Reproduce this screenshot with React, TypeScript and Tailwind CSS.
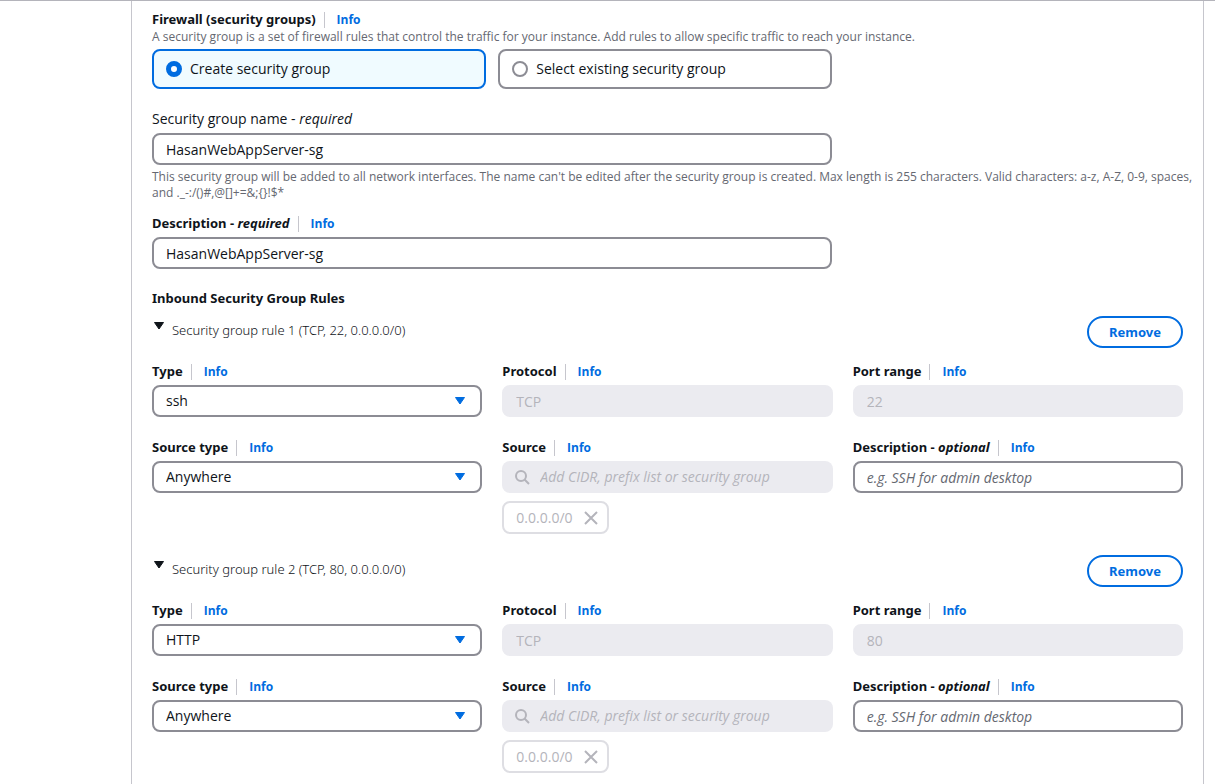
import { useState, type ReactNode } from 'react'
import clsx from 'clsx'

const rules = [
  { id: 1, type: 'ssh', protocol: 'TCP', port: '22', cidr: '0.0.0.0/0' },
  { id: 2, type: 'HTTP', protocol: 'TCP', port: '80', cidr: '0.0.0.0/0' },
]

const nameHint =
  "This security group will be added to all network interfaces. The name can't be edited after the security group is created. Max length is 255 characters. Valid characters: a-z, A-Z, 0-9, spaces, and ._-:/()#,@[]+=&;{}!$*"

const heading = "font-['Noto_Sans',sans-serif] text-[13px] leading-5 font-bold"
const inputBase = 'block h-8 w-full rounded-lg border-2 px-3 text-sm leading-5 outline-none placeholder:italic'
const inputEnabled = 'border-[#8c8c94] bg-white text-[#0f141a] placeholder:text-[#656871]'
const inputDisabled = 'border-[#ebebf0] bg-[#ebebf0] text-[#b4b4bb] placeholder:text-[#b4b4bb]'

function InfoLink() {
  return (
    <a href="#info" className="mt-0.5 ml-2 border-l border-[#c6c6cd] pl-3 text-xs leading-4 font-bold text-[#006ce0]">
      Info
    </a>
  )
}

function FieldLabel({ htmlFor, note, children }: { htmlFor: string; note?: string; children: ReactNode }) {
  return (
    <div className="mb-1 flex h-5 items-center">
      <label htmlFor={htmlFor} className={heading}>
        {children}
        {note && <> - <em>{note}</em></>}
      </label>
      <InfoLink />
    </div>
  )
}

function SelectField({ id, value, options }: { id: string; value: string; options: string[] }) {
  return (
    <div className="relative">
      <select id={id} defaultValue={value} className={clsx(inputBase, inputEnabled, 'appearance-none')}>
        {options.map((option) => (
          <option key={option}>{option}</option>
        ))}
      </select>
      <svg viewBox="0 0 16 16" className="pointer-events-none absolute top-2 right-3.5 size-4" aria-hidden="true">
        <path d="M3.5 4.5h9L8 11z" fill="#006ce0" stroke="#006ce0" strokeLinejoin="round" />
      </svg>
    </div>
  )
}

function Rule({ rule }: { rule: (typeof rules)[number] }) {
  const [open, setOpen] = useState(true)
  const key = `rule-${rule.id}`

  return (
    <section className="mb-[21px]">
      <div className="flex items-start justify-between">
        <button
          type="button"
          aria-expanded={open}
          onClick={() => setOpen(!open)}
          className="flex items-start gap-1 pt-1 font-['Noto_Sans',sans-serif] text-[13px] leading-5 font-light"
        >
          <svg viewBox="0 0 16 16" className={clsx('size-4', !open && '-rotate-90')} aria-hidden="true">
            <path d="M2.5 2.5h9L7 9z" fill="#0f141a" stroke="#0f141a" strokeLinejoin="round" />
          </svg>
          {`Security group rule ${rule.id} (${rule.protocol}, ${rule.port}, ${rule.cidr})`}
        </button>
        <button
          type="button"
          className={clsx(heading, 'h-8 rounded-full border-2 border-[#006ce0] px-5 text-[#006ce0]')}
        >
          Remove
        </button>
      </div>

      {open && (
        <div className="mt-[13px] grid grid-cols-3 gap-5">
          <div>
            <FieldLabel htmlFor={`${key}-type`}>Type</FieldLabel>
            <SelectField id={`${key}-type`} value={rule.type} options={['ssh', 'HTTP', 'HTTPS']} />
          </div>
          <div>
            <FieldLabel htmlFor={`${key}-protocol`}>Protocol</FieldLabel>
            <input id={`${key}-protocol`} disabled defaultValue={rule.protocol} className={clsx(inputBase, inputDisabled)} />
          </div>
          <div>
            <FieldLabel htmlFor={`${key}-port`}>Port range</FieldLabel>
            <input id={`${key}-port`} disabled defaultValue={rule.port} className={clsx(inputBase, inputDisabled)} />
          </div>
          <div>
            <FieldLabel htmlFor={`${key}-source-type`}>Source type</FieldLabel>
            <SelectField id={`${key}-source-type`} value="Anywhere" options={['Anywhere', 'Custom', 'My IP']} />
          </div>
          <div>
            <FieldLabel htmlFor={`${key}-source`}>Source</FieldLabel>
            <div className="flex h-8 items-center gap-2.5 rounded-lg bg-[#ebebf0] px-3">
              <svg viewBox="0 0 16 16" className="size-4 shrink-0" fill="none" stroke="#b4b4bb" strokeWidth="2" aria-hidden="true">
                <circle cx="7" cy="7" r="5" />
                <path d="M10.5 10.5l4.5 4.5" />
              </svg>
              <input
                id={`${key}-source`}
                disabled
                placeholder="Add CIDR, prefix list or security group"
                className="w-full bg-transparent text-sm leading-5 placeholder:text-[#b4b4bb] placeholder:italic"
              />
            </div>
            <div className="mt-2 flex h-[33px] w-fit items-center gap-2.5 rounded-lg border-2 border-[#dedee3] pr-2 pl-3 text-sm leading-5 text-[#b4b4bb]">
              {rule.cidr}
              <button type="button" disabled aria-label={`Remove ${rule.cidr}`}>
                <svg viewBox="0 0 16 16" className="block size-4" fill="none" stroke="#b4b4bb" strokeWidth="2" aria-hidden="true">
                  <path d="M2 2l12 12M14 2L2 14" />
                </svg>
              </button>
            </div>
          </div>
          <div>
            <FieldLabel htmlFor={`${key}-description`} note="optional">Description</FieldLabel>
            <input id={`${key}-description`} placeholder="e.g. SSH for admin desktop" className={clsx(inputBase, inputEnabled)} />
          </div>
        </div>
      )}
    </section>
  )
}

export default function App() {
  const [mode, setMode] = useState('create')
  const modes = [
    { value: 'create', label: 'Create security group' },
    { value: 'existing', label: 'Select existing security group' },
  ]

  return (
    <div className="h-screen overflow-hidden border-t border-[#b4b4bb] bg-white pr-[11px] pl-[131px] font-['Open_Sans',sans-serif] text-[#0f141a]">
      <main className="min-h-full border-x border-[#c6c6cd] px-5 pt-2">
        <div role="radiogroup" aria-labelledby="firewall">
          <div className="flex h-5 items-center">
            <h2 id="firewall" className={heading}>Firewall (security groups)</h2>
            <InfoLink />
          </div>
          <p className="text-xs leading-4 text-[#656871]">
            A security group is a set of firewall rules that control the traffic for your instance. Add rules to allow specific traffic to reach your instance.
          </p>
          <div className="mt-1 grid w-[66%] grid-cols-2 gap-3">
            {modes.map((item) => (
              <label
                key={item.value}
                className={clsx(
                  'flex h-10 items-center gap-2 rounded-lg border-2 px-3 text-sm leading-5',
                  mode === item.value ? 'border-[#006ce0] bg-[#f0fbff]' : 'border-[#8c8c94] bg-white'
                )}
              >
                <input
                  type="radio"
                  name="security-group-mode"
                  checked={mode === item.value}
                  onChange={() => setMode(item.value)}
                  className="size-4 appearance-none rounded-full border-2 border-[#8c8c94] bg-white checked:border-5 checked:border-[#006ce0]"
                />
                {item.label}
              </label>
            ))}
          </div>
        </div>

        <div className="mt-5">
          <label htmlFor="group-name" className="mb-1 block text-sm leading-5">
            Security group name - <em>required</em>
          </label>
          <div className="w-[66%]">
            <input id="group-name" defaultValue="HasanWebAppServer-sg" className={clsx(inputBase, inputEnabled)} />
          </div>
          <p className="mt-1 -mr-4 text-xs leading-4 text-[#656871]">{nameHint}</p>
        </div>

        <div className="mt-3">
          <FieldLabel htmlFor="group-description" note="required">Description</FieldLabel>
          <div className="w-[66%]">
            <input id="group-description" defaultValue="HasanWebAppServer-sg" className={clsx(inputBase, inputEnabled)} />
          </div>
        </div>

        <h3 className={clsx(heading, 'mt-[19px] mb-2')}>Inbound Security Group Rules</h3>
        {rules.map((rule) => (
          <Rule key={rule.id} rule={rule} />
        ))}
      </main>
    </div>
  )
}
